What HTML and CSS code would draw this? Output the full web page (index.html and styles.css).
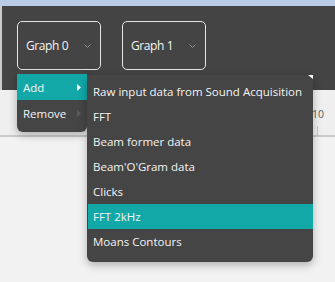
FILE: index.html
```html
<!DOCTYPE html>
<html>
<head>
<meta charset="utf-8">
<link rel="stylesheet" href="styles.css">
</head>
<body>
<div class="app">
  <div class="titlebar"></div>
  <div class="toolbar">
    <div class="graph-btn">
      <span class="graph-label">Graph 0</span>
      <svg class="chev" width="7" height="5" viewBox="0 0 7 5"><path d="M0.5 0.5 L3.5 3.5 L6.5 0.5" fill="none" stroke="#8f8f8f" stroke-width="1"/></svg>
    </div>
    <div class="graph-btn">
      <span class="graph-label">Graph 1</span>
      <svg class="chev" width="7" height="5" viewBox="0 0 7 5"><path d="M0.5 0.5 L3.5 3.5 L6.5 0.5" fill="none" stroke="#8f8f8f" stroke-width="1"/></svg>
    </div>
  </div>
  <div class="ruler">
    <div class="axis-label">
      <span>10</span>
      <div class="tick"></div>
    </div>
  </div>
  <div class="plot"></div>

  <div class="menu menu-main">
    <div class="mi active"><span>Add</span><svg width="4" height="7" viewBox="0 0 4 7"><path d="M0 0 L4 3.5 L0 7 Z" fill="#ffffff"/></svg></div>
    <div class="mi"><span>Remove</span><svg width="4" height="7" viewBox="0 0 4 7"><path d="M0 0 L4 3.5 L0 7 Z" fill="#5c5c5c"/></svg></div>
  </div>

  <div class="menu menu-sub">
    <div class="corner"></div>
    <div class="si">Raw input data from Sound Acquisition</div>
    <div class="si">FFT</div>
    <div class="si">Beam former data</div>
    <div class="si">Beam'O'Gram data</div>
    <div class="si">Clicks</div>
    <div class="si active">FFT 2kHz</div>
    <div class="si">Moans Contours</div>
  </div>
</div>
</body>
</html>
```
FILE: styles.css
```css
* { box-sizing: border-box; }
html, body { margin: 0; padding: 0; }
body {
  background: #f2f2f2;
  font-family: "Open Sans", "Noto Sans", sans-serif;
  color: #f4f4f4;
  width: 335px;
  height: 282px;
  overflow: hidden;
}
.app { position: relative; width: 335px; height: 282px; }
.titlebar { height: 6px; background: #b9cde6; }
.toolbar {
  height: 84px;
  background: #444444;
  border-left: 2px solid #cbcbcb;
  display: flex;
  gap: 21px;
  padding: 15px 0 0 15px;
}
.graph-btn {
  width: 84px;
  height: 49px;
  border: 1px solid #e4e4e4;
  border-radius: 5px;
  display: flex;
  align-items: center;
  justify-content: space-between;
  padding: 0 9px 0 8px;
}
.graph-label { font-size: 12px; letter-spacing: -0.4px; color: #f4f4f4; }
.chev { display: block; margin-top: 1px; }
.ruler {
  height: 47px;
  background: #efefef;
  border-bottom: 2px solid #cacaca;
  display: flex;
  justify-content: flex-end;
  align-items: flex-end;
  padding-right: 11px;
}
.axis-label {
  display: flex;
  flex-direction: column;
  align-items: center;
  font-size: 10.5px;
  color: #5a5a5a;
  line-height: 13px;
}
.tick { width: 1px; height: 9px; background: #c4c4c4; margin-top: 5px; }
.plot { height: 145px; }
.menu {
  position: absolute;
  background: #454545;
  box-shadow: 0 3px 8px rgba(0,0,0,0.28);
}
.menu-main {
  left: 17px;
  top: 71px;
  width: 70px;
  height: 61px;
  border-radius: 2px 2px 6px 6px;
  padding-top: 3px;
}
.mi {
  height: 26px;
  display: flex;
  align-items: center;
  justify-content: space-between;
  padding: 0 6px 0 6px;
  font-size: 11.5px;
}
.mi svg { display: block; }
.mi.active { background: #12a8a8; }
.menu-sub {
  left: 87px;
  top: 75px;
  width: 226px;
  height: 187px;
  border-radius: 1px 1px 6px 6px;
  padding: 3.5px 0 0 1px;
  z-index: 2;
}
.corner {
  position: absolute;
  top: 0;
  right: 0;
  width: 5px;
  height: 4px;
  background: #ffffff;
  clip-path: polygon(0 0, 100% 0, 100% 100%);
}
.si {
  height: 25px;
  display: flex;
  align-items: center;
  padding-left: 5px;
  font-size: 11.5px;
  white-space: nowrap;
}
.si.active { background: #12a8a8; }
```
